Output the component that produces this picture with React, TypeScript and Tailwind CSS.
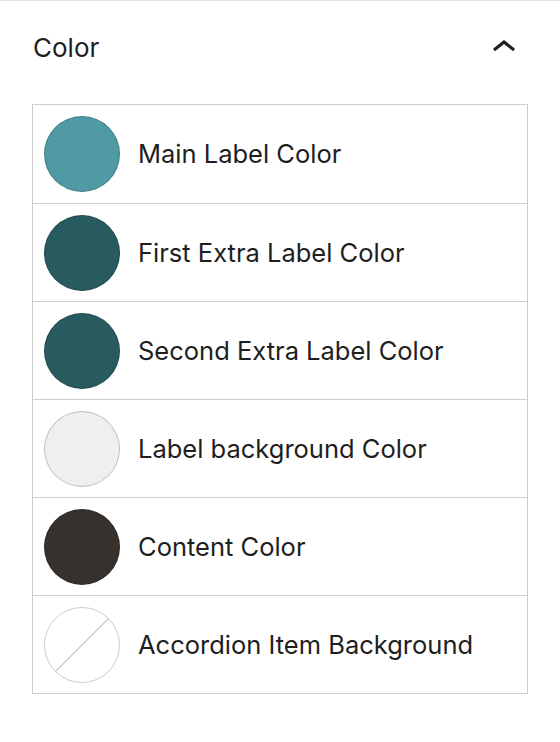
import React from 'react';

const items = [
    { label: 'Main Label Color', color: '#4f9aa3' },
    { label: 'First Extra Label Color', color: '#285b60' },
    { label: 'Second Extra Label Color', color: '#285b60' },
    { label: 'Label background Color', color: '#eef0ef' },
    { label: 'Content Color', color: '#36312d' },
    { label: 'Accordion Item Background', color: null },
];

export default function App() {
    return (
        <div className="w-[560px] h-[742px] bg-white border-t border-[#e0e0e0] font-['Inter',sans-serif] text-[#1e1e1e]">
            {/* Panel header */}
            <div className="flex items-center justify-between pl-[33px] pr-[32px] h-[94px]">
                <span className="text-[26px] leading-none">Color</span>
                <svg width="48" height="48" viewBox="0 0 24 24" className="text-[#1e1e1e]">
                    <path d="M6.5 12.4L12 8l5.5 4.4-.9 1.2L12 10l-4.5 3.6-1-1.2z" fill="currentColor" />
                </svg>
            </div>

            {/* Color list */}
            <div className="ml-[32px] mt-[9px] w-[496px] border border-[#cccccc]">
                {items.map((item, i) => (
                    <div
                        key={item.label}
                        className={`flex items-center gap-[18px] h-[98px] pl-[11px] ${i > 0 ? 'border-t border-[#cccccc]' : ''}`}
                    >
                        {item.color ? (
                            <span
                                className="block w-[76px] h-[76px] rounded-full border border-black/20 shrink-0"
                                style={{ backgroundColor: item.color }}
                            />
                        ) : (
                            <svg width="76" height="76" viewBox="0 0 76 76" className="shrink-0">
                                <circle cx="38" cy="38" r="37.5" fill="white" stroke="#cccccc" strokeWidth="1" />
                                <line x1="64.5" y1="11.5" x2="11.5" y2="64.5" stroke="#cccccc" strokeWidth="1.5" />
                            </svg>
                        )}
                        <span className="text-[25.5px] leading-none">{item.label}</span>
                    </div>
                ))}
            </div>
        </div>
    );
}
